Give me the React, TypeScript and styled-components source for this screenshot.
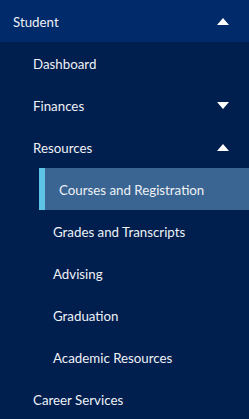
import React from "react";
import styled, { createGlobalStyle } from "styled-components";

const GlobalStyle = createGlobalStyle`
    html, body {
        margin: 0;
        padding: 0;
        background: #001e4e;
    }
    body {
        font-family: "Lato", "Liberation Sans", sans-serif;
    }
`;

type Child = { label: string; active?: boolean };
type Item = { label: string; open?: boolean; children?: Child[] };

const items: Item[] = [
    { label: "Dashboard" },
    { label: "Finances", open: false, children: [] },
    {
        label: "Resources",
        open: true,
        children: [
            { label: "Courses and Registration", active: true },
            { label: "Grades and Transcripts" },
            { label: "Advising" },
            { label: "Graduation" },
            { label: "Academic Resources" },
        ],
    },
    { label: "Career Services" },
];

const Caret: React.FC<{ up?: boolean }> = ({ up }) => (
    <CaretIcon width="12" height="7" viewBox="0 0 12 7">
        {up ? <path d="M6 0 L12 7 L0 7 Z" fill="#fff" /> : <path d="M0 0 L12 0 L6 7 Z" fill="#fff" />}
    </CaretIcon>
);

export default function App() {
    return (
        <>
            <GlobalStyle />
            <Nav>
                <Header>
                    <Label>Student</Label>
                    <Caret up />
                </Header>
                <List>
                    {items.map((item) => (
                        <li key={item.label}>
                            <Row>
                                <Label>{item.label}</Label>
                                {item.children && <Caret up={item.open} />}
                            </Row>
                            {item.open && item.children && (
                                <SubList>
                                    {item.children.map((c) => (
                                        <SubRow key={c.label} $active={c.active}>
                                            <Label>{c.label}</Label>
                                        </SubRow>
                                    ))}
                                </SubList>
                            )}
                        </li>
                    ))}
                </List>
            </Nav>
        </>
    );
}

const Nav = styled.nav`
    width: 249px;
    height: 419px;
    background: #001e4e;
    color: #eef1f6;
    font-size: 13.3px;
    overflow: hidden;
`;

const Label = styled.span`
    padding-top: 2px;
`;

const Header = styled.div`
    height: 42px;
    display: flex;
    align-items: center;
    justify-content: space-between;
    padding: 0 20px 0 13px;
    background: #002a6a;
`;

const CaretIcon = styled.svg`
    display: block;
`;

const List = styled.ul`
    list-style: none;
    margin: 0;
    padding: 0;
`;

const Row = styled.div`
    height: 42px;
    display: flex;
    align-items: center;
    justify-content: space-between;
    padding: 0 20px 0 33px;
`;

const SubList = styled.ul`
    list-style: none;
    margin: 0;
    padding: 0 0 0 39px;
`;

const SubRow = styled.li<{ $active?: boolean }>`
    height: 42px;
    display: flex;
    align-items: center;
    padding-left: 14px;
    background: ${(p) => (p.$active ? "#3a6592" : "transparent")};
    border-left: ${(p) => (p.$active ? "6px solid #5ec4e6" : "none")};
`;
